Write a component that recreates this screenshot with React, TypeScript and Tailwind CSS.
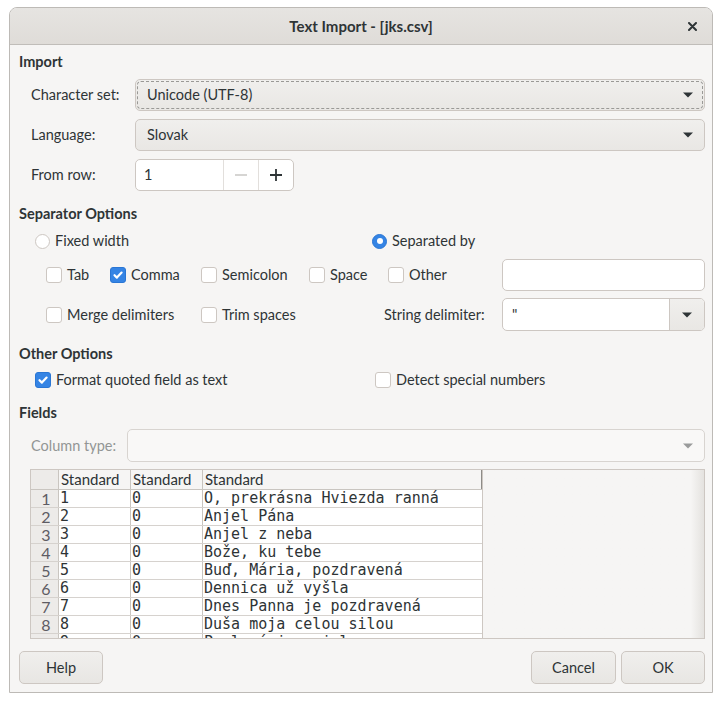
import React from "react";

interface Row {
  n: number;
  a: string;
  b: string;
  c: string;
}

const rows: Row[] = [
  { n: 1, a: "1", b: "0", c: "O, prekrásna Hviezda ranná" },
  { n: 2, a: "2", b: "0", c: "Anjel Pána" },
  { n: 3, a: "3", b: "0", c: "Anjel z neba" },
  { n: 4, a: "4", b: "0", c: "Bože, ku tebe" },
  { n: 5, a: "5", b: "0", c: "Buď, Mária, pozdravená" },
  { n: 6, a: "6", b: "0", c: "Dennica už vyšla" },
  { n: 7, a: "7", b: "0", c: "Dnes Panna je pozdravená" },
  { n: 8, a: "8", b: "0", c: "Duša moja celou silou" },
  { n: 9, a: "9", b: "0", c: "Poslaný je anjel" },
];

const Arrow = ({ color = "#2e3436" }: { color?: string }) => (
  <svg width="10" height="6" viewBox="0 0 10 6">
    <path d="M0 0.5h10L5 5.5z" fill={color} />
  </svg>
);

const Check = ({ checked }: { checked?: boolean }) =>
  checked ? (
    <span className="w-[16px] h-[16px] shrink-0 rounded-[3px] bg-[#3584e4] border border-[#2a76d4] flex items-center justify-center">
      <svg width="12" height="12" viewBox="0 0 12 12">
        <path
          d="M2.5 6.2l2.4 2.4L9.6 3.6"
          stroke="white"
          strokeWidth="2.2"
          fill="none"
          strokeLinecap="round"
          strokeLinejoin="round"
        />
      </svg>
    </span>
  ) : (
    <span className="w-[16px] h-[16px] shrink-0 rounded-[3px] bg-white border border-[#cdc7c2]" />
  );

const Radio = ({ on }: { on?: boolean }) =>
  on ? (
    <span className="w-[15px] h-[15px] shrink-0 rounded-full bg-[#3584e4] border border-[#2a76d4] flex items-center justify-center">
      <span className="w-[6px] h-[6px] rounded-full bg-white" />
    </span>
  ) : (
    <span className="w-[15px] h-[15px] shrink-0 rounded-full bg-white border border-[#cdc7c2]" />
  );

const CheckItem = ({ label, checked, w }: { label: string; checked?: boolean; w: string }) => (
  <div className={`flex items-center gap-[5px] ${w}`}>
    <Check checked={checked} />
    <span>{label}</span>
  </div>
);

const Combo = ({ text, focus }: { text: string; focus?: boolean }) => (
  <div className="relative flex-1 h-full flex items-center justify-between pl-[11px] pr-[11px] rounded-[5px] border border-[#cdc7c2] bg-gradient-to-b from-[#f0efed] to-[#e9e7e4]">
    {focus && (
      <span className="absolute inset-[1px] rounded-[4px] border border-dashed border-[#9a9996]" />
    )}
    <span>{text}</span>
    <Arrow />
  </div>
);

const Button = ({ label, w }: { label: string; w: string }) => (
  <div
    className={`${w} h-full flex items-center justify-center rounded-[5px] border border-[#cdc7c2] bg-gradient-to-b from-[#f0efed] to-[#e8e6e3]`}
  >
    {label}
  </div>
);

export default function App() {
  return (
    <div className="min-h-[703px] bg-white pt-[7px] pl-[9px] font-[Lato,sans-serif] text-[14.5px] text-[#2e3436]">
      <div className="w-[704px] h-[686px] border border-[#bdbab6] rounded-t-[8px] bg-[#f6f5f4] flex flex-col overflow-hidden">
        {/* title bar */}
        <div className="h-[37px] shrink-0 relative flex items-center justify-center border-b border-[#c0bdb9] bg-gradient-to-b from-[#e6e4e1] to-[#dfdcd8]">
          <span className="font-bold text-[15px]">Text Import - [jks.csv]</span>
          <svg className="absolute right-[15px] top-[14px]" width="9" height="9" viewBox="0 0 9 9">
            <path d="M1 1l7 7M8 1L1 8" stroke="#2e3436" strokeWidth="2" strokeLinecap="round" />
          </svg>
        </div>

        <div className="flex flex-col pl-[9px] pr-[7px]">
          <div className="mt-[7px] h-[20px] leading-[20px] font-bold">Import</div>

          <div className="mt-[7px] h-[32px] flex items-center">
            <span className="w-[116px] pl-[12px] shrink-0">Character set:</span>
            <Combo text="Unicode (UTF-8)" focus />
          </div>
          <div className="mt-[8px] h-[32px] flex items-center">
            <span className="w-[116px] pl-[12px] shrink-0">Language:</span>
            <Combo text="Slovak" />
          </div>
          <div className="mt-[8px] h-[32px] flex items-center">
            <span className="w-[116px] pl-[12px] shrink-0">From row:</span>
            <div className="w-[159px] h-full flex rounded-[5px] border border-[#cdc7c2] bg-white overflow-hidden">
              <span className="flex-1 flex items-center pl-[8px]">1</span>
              <span className="w-[35px] flex items-center justify-center border-l border-[#e2dfdc]">
                <svg width="12" height="2" viewBox="0 0 12 2">
                  <path d="M0 1h12" stroke="#c8c7c5" strokeWidth="1.4" />
                </svg>
              </span>
              <span className="w-[35px] flex items-center justify-center border-l border-[#e2dfdc]">
                <svg width="12" height="12" viewBox="0 0 12 12">
                  <path d="M0 6h12M6 0v12" stroke="#2e3436" strokeWidth="1.8" />
                </svg>
              </span>
            </div>
          </div>

          <div className="mt-[13px] h-[20px] leading-[20px] font-bold">Separator Options</div>

          <div className="mt-[7px] h-[20px] flex items-center">
            <div className="w-[353px] pl-[16px] flex items-center gap-[5px]">
              <Radio />
              <span>Fixed width</span>
            </div>
            <div className="flex items-center gap-[5px]">
              <Radio on />
              <span>Separated by</span>
            </div>
          </div>

          <div className="mt-[8px] h-[32px] flex items-center pl-[27px]">
            <CheckItem label="Tab" w="w-[64px]" />
            <CheckItem label="Comma" checked w="w-[91px]" />
            <CheckItem label="Semicolon" w="w-[108px]" />
            <CheckItem label="Space" w="w-[79px]" />
            <CheckItem label="Other" w="w-[114px]" />
            <div className="flex-1 h-full rounded-[5px] border border-[#cdc7c2] bg-white" />
          </div>

          <div className="mt-[7px] h-[33px] flex items-center pl-[27px]">
            <CheckItem label="Merge delimiters" w="w-[155px]" />
            <CheckItem label="Trim spaces" w="w-[183px]" />
            <span className="w-[118px]">String delimiter:</span>
            <div className="flex-1 h-full flex rounded-[5px] border border-[#cdc7c2] bg-white overflow-hidden">
              <span className="flex-1 flex items-center pl-[9px]">"</span>
              <span className="w-[35px] flex items-center justify-center border-l border-[#cdc7c2] bg-gradient-to-b from-[#f0efed] to-[#e9e7e4]">
                <Arrow />
              </span>
            </div>
          </div>

          <div className="mt-[13px] h-[20px] leading-[20px] font-bold">Other Options</div>

          <div className="mt-[6px] h-[20px] flex items-center">
            <div className="w-[356px] pl-[16px] flex items-center gap-[5px]">
              <Check checked />
              <span>Format quoted field as text</span>
            </div>
            <div className="flex items-center gap-[5px]">
              <Check />
              <span>Detect special numbers</span>
            </div>
          </div>

          <div className="mt-[13px] h-[20px] leading-[20px] font-bold">Fields</div>

          <div className="mt-[6px] h-[33px] flex items-center">
            <span className="w-[108px] pl-[12px] shrink-0 text-[#929595]">Column type:</span>
            <div className="flex-1 h-full flex items-center justify-end pr-[11px] rounded-[5px] border border-[#d8d4d0] bg-[#f9f8f7]">
              <Arrow color="#9a9b9b" />
            </div>
          </div>

          {/* preview grid */}
          <div className="mt-[7px] ml-[11px] h-[170px] flex border border-[#cdc7c2] overflow-hidden">
            <div className="w-[452px] shrink-0 flex flex-col border-r border-[#cdc7c2] text-[15px]">
              <div className="h-[20px] shrink-0 flex border-b border-[#c9c5c0] leading-[19px]">
                <span className="w-[28px] shrink-0 bg-[#edebe9] border-r border-[#c9c5c0]" />
                <span className="w-[72px] shrink-0 pl-[2px] border-r border-[#c9c5c0]">Standard</span>
                <span className="w-[72px] shrink-0 pl-[2px] border-r border-[#c9c5c0]">Standard</span>
                <span className="flex-1 pl-[2px] border-r border-[#8e8c88]">Standard</span>
              </div>
              {rows.map((r) => (
                <div key={r.n} className="h-[18px] shrink-0 flex border-b border-[#d6d2ce] leading-[17px]">
                  <span className="w-[28px] shrink-0 bg-[#edebe9] border-r border-[#c9c5c0] text-[#5e5c64] text-[16px] text-center pl-[3px]">
                    {r.n}
                  </span>
                  <span className="w-[72px] shrink-0 bg-white pl-[1px] border-r border-[#c9c5c0] font-['DejaVu_Sans_Mono',monospace]">
                    {r.a}
                  </span>
                  <span className="w-[72px] shrink-0 bg-white pl-[1px] border-r border-[#c9c5c0] font-['DejaVu_Sans_Mono',monospace]">
                    {r.b}
                  </span>
                  <span className="flex-1 bg-white pl-[1px] whitespace-nowrap font-['DejaVu_Sans_Mono',monospace]">
                    {r.c}
                  </span>
                </div>
              ))}
            </div>
            <div className="flex-1 bg-gradient-to-r from-[#f6f5f4] via-[#f6f5f4] via-[94%] to-[#e4e2df]" />
          </div>

          <div className="mt-[12px] h-[33px] flex items-center">
            <Button label="Help" w="w-[84px]" />
            <div className="flex-1" />
            <Button label="Cancel" w="w-[85px]" />
            <div className="w-[5px]" />
            <Button label="OK" w="w-[84px]" />
          </div>
        </div>
      </div>
    </div>
  );
}
